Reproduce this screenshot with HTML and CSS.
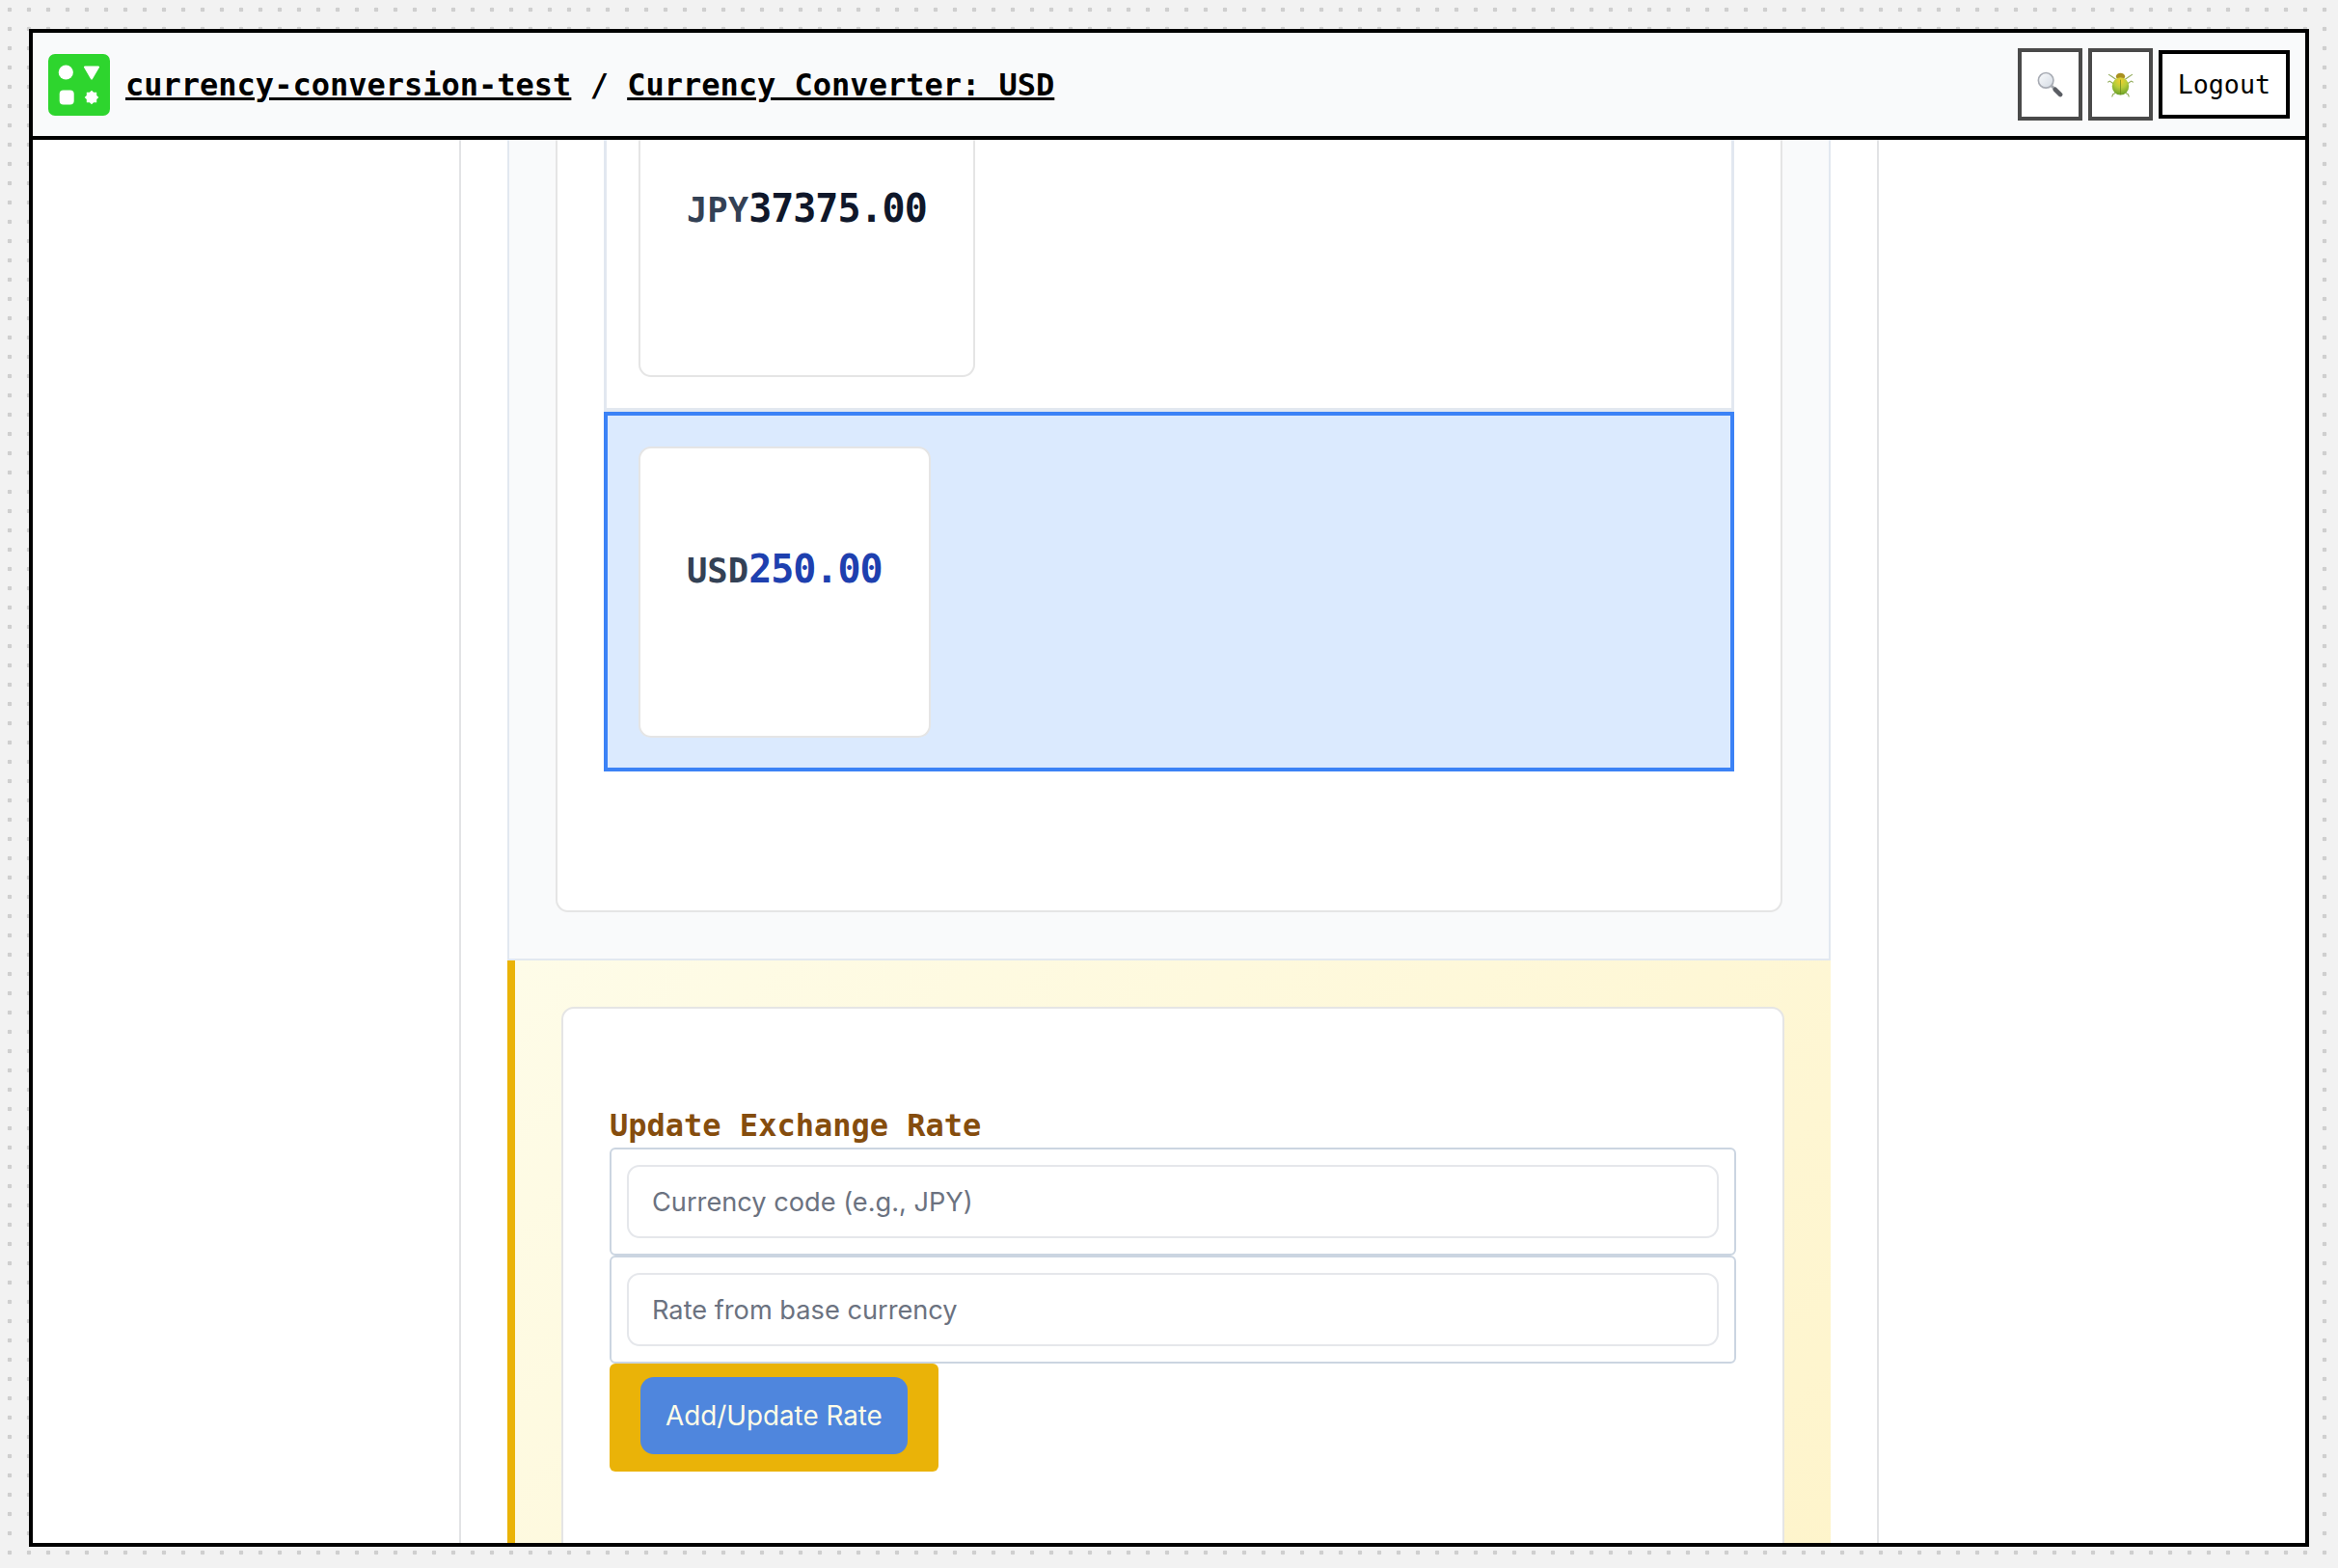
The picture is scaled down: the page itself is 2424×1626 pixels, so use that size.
FILE: index.html
```html
<!DOCTYPE html>
<html>
<head>
    <title>Currency Converter: USD</title>
    <link rel="stylesheet" href="styles.css">
</head>
<body>
    <div class="frame">
        <header class="topbar">
            <svg class="logo" viewBox="0 0 64 64">
                <rect width="64" height="64" rx="7" fill="#2ed52e"/>
                <circle cx="18.3" cy="19" r="7.6" fill="#fff"/>
                <path d="M38 12.5h14a1 1 0 0 1 .9 1.5l-7 12a1 1 0 0 1-1.8 0l-7-12a1 1 0 0 1 .9-1.5z" fill="#fff"/>
                <rect x="11.7" y="37.5" width="15" height="15" rx="4" fill="#fff"/>
                <path d="M45 37.7l2.1 2.1 3.1 0 0 3.1 2.1 2.1-2.1 2.1 0 3.1-3.1 0-2.1 2.1-2.1-2.1-3.1 0 0-3.1-2.1-2.1 2.1-2.1 0-3.1 3.1 0z" fill="#fff"/>
            </svg>
            <div class="crumbs"><a href="#">currency-conversion-test</a> / <a href="#">Currency Converter: USD</a></div>
            <div class="actions">
                <button class="icon-btn">
                    <svg viewBox="0 0 28 28">
                        <defs>
                            <linearGradient id="lens" x1="0" y1="0" x2="1" y2="1">
                                <stop offset="0" stop-color="#fbfcfd"/>
                                <stop offset="1" stop-color="#d3dae3"/>
                            </linearGradient>
                        </defs>
                        <path d="M15.5 15.5l3 3" stroke="#a3a7ad" stroke-width="3"/>
                        <path d="M19.5 19.5l5.5 5.5" stroke="#5a5d63" stroke-width="4.8" stroke-linecap="round"/>
                        <circle cx="9.5" cy="9.7" r="8.1" fill="url(#lens)" stroke="#a8acb4" stroke-width="1.7"/>
                    </svg>
                </button>
                <button class="icon-btn">
                    <svg viewBox="0 0 28 28">
                        <defs>
                            <radialGradient id="shell" cx="0.5" cy="0.2" r="0.85">
                                <stop offset="0" stop-color="#f2cf2e"/>
                                <stop offset="0.45" stop-color="#b8cd3a"/>
                                <stop offset="1" stop-color="#5f9a26"/>
                            </radialGradient>
                        </defs>
                        <g fill="none" stroke="#94ad5e" stroke-width="1.2" stroke-linecap="round">
                            <path d="M9 8.5L4.5 5.5 1.5 3.5"/>
                            <path d="M19 8.5l4.5-3 3-2"/>
                            <path d="M6 13L2.5 10.5 0.8 11.5"/>
                            <path d="M22 13l3.5-2.5 1.7 1"/>
                            <path d="M8 23.5L6 24.5 5 27"/>
                            <path d="M20 23.5l2 1 1 2.5"/>
                        </g>
                        <ellipse cx="14" cy="5.5" rx="4.8" ry="3.8" fill="#a9901f"/>
                        <ellipse cx="14" cy="16" rx="9" ry="9.5" fill="url(#shell)"/>
                        <path d="M14 9v16" stroke="#6e8a1c" stroke-width="0.8"/>
                    </svg>
                </button>
                <button class="logout">Logout</button>
            </div>
        </header>
        <main class="viewport">
            <div class="column">
                <section class="panel">
                    <div class="card">
                        <div class="rate-row">
                            <div class="rate-box">
                                <div class="rate-text"><span class="code">JPY</span><span class="amount">37375.00</span></div>
                            </div>
                        </div>
                        <div class="rate-row base">
                            <div class="rate-box">
                                <div class="rate-text"><span class="code">USD</span><span class="amount">250.00</span></div>
                            </div>
                        </div>
                    </div>
                </section>
                <section class="update-panel">
                    <div class="update-card">
                        <h3>Update Exchange Rate</h3>
                        <div class="field"><input type="text" placeholder="Currency code (e.g., JPY)"></div>
                        <div class="field"><input type="text" placeholder="Rate from base currency"></div>
                        <div class="submit-wrap"><button class="submit">Add/Update Rate</button></div>
                    </div>
                </section>
            </div>
        </main>
    </div>
</body>
</html>
```

FILE: styles.css
```css
* {
    box-sizing: border-box;
}

html,
body {
    margin: 0;
    height: 100%;
}

body {
    height: 1626px;
    padding: 30px 30px 22px;
    overflow: hidden;
    background-color: #f2f2f2;
    background-image: radial-gradient(circle, #cfcfcf 2.2px, transparent 2.6px);
    background-size: 20px 20px;
    font-family: "DejaVu Sans Mono", monospace;
}

.frame {
    display: flex;
    flex-direction: column;
    height: 100%;
    border: 4px solid #000;
    background-color: #fff;
}

.topbar {
    display: flex;
    align-items: center;
    flex: none;
    height: 111px;
    padding: 0 16px;
    background-color: #f9fafb;
    border-bottom: 4px solid #000;
}

.logo {
    flex: none;
    width: 64px;
    height: 64px;
    margin-right: 16px;
}

.crumbs {
    flex: 1;
    font-size: 32px;
    font-weight: bold;
    color: #000;
}

.crumbs a {
    color: #000;
    text-decoration-thickness: 3px;
}

.actions {
    display: flex;
    align-items: center;
    gap: 6px;
}

.icon-btn {
    display: flex;
    padding: 20px 16px;
    background-color: #fff;
    border: 4px solid #4a4a4a;
}

.icon-btn svg {
    width: 27px;
    height: 27px;
}

.logout {
    height: 71px;
    padding: 0 16px;
    font-family: "DejaVu Sans Mono", monospace;
    font-size: 26.67px;
    color: #000;
    background-color: #fff;
    border: 4px solid #000;
}

.viewport {
    flex: 1;
    min-height: 0;
    overflow: hidden;
}

.column {
    width: 1472px;
    margin: -237px auto 0;
    padding: 0 48px;
    border-left: 2px solid #e2e3e5;
    border-right: 2px solid #e2e3e5;
}

.panel {
    padding: 48px;
    background-color: #f9fafb;
    border-left: 2px solid #e2e8f0;
    border-right: 2px solid #e2e8f0;
    border-bottom: 2px solid #e2e8f0;
}

.card {
    padding: 48px 48px 144px;
    background-color: #fff;
    border: 2px solid #e5e5e5;
    border-radius: 13px;
}

.rate-row {
    padding: 33px 33px 32px;
    border: 3px solid #e2e8f0;
    border-bottom-width: 4px;
}

.rate-row.base {
    padding: 32px 32px 31px;
    background-color: #dbeafe;
    border: 4px solid #3b82f6;
}

.rate-box {
    display: flex;
    flex-direction: column;
    justify-content: flex-end;
    width: fit-content;
    aspect-ratio: 1;
    padding: 0 48px 151px;
    font-weight: bold;
    font-size: 40px;
    line-height: 40px;
    white-space: nowrap;
    background-color: #fff;
    border: 2px solid #e5e5e5;
    border-radius: 13px;
}

.code {
    font-size: 35.5px;
    color: #334155;
}

.amount {
    letter-spacing: -1px;
    color: #0f172a;
}

.base .amount {
    color: #1e40af;
}

.update-panel {
    padding: 48px;
    background: linear-gradient(135deg, #fefce8, #fef3c7);
    border-left: 8px solid #eab308;
}

.update-card {
    padding: 48px;
    height: 800px;
    background-color: #fff;
    border: 2px solid #e5e5e5;
    border-radius: 13px;
}

.update-card h3 {
    margin: 50px 0 0;
    font-size: 32px;
    line-height: 46px;
    font-weight: bold;
    color: #854d0e;
}

.field {
    padding: 16px;
    height: 112px;
    background-color: #fff;
    border: 2px solid #cbd5e1;
    border-radius: 6px;
}

.field input {
    display: block;
    width: 100%;
    height: 76px;
    padding: 0 24px;
    font-family: Inter, sans-serif;
    font-size: 27.2px;
    background-color: #fff;
    border: 2px solid #e5e7eb;
    border-radius: 13px;
}

.field input::placeholder {
    color: #6b7280;
    opacity: 1;
}

.submit-wrap {
    width: fit-content;
    padding: 14px 32px 18px;
    background-color: #eab308;
    border-radius: 6px;
}

.submit {
    display: block;
    height: 80px;
    padding: 0 26px;
    font-family: Inter, sans-serif;
    font-size: 27.8px;
    color: #fefce8;
    background-color: #4f86dd;
    border: none;
    border-radius: 14px;
}
```
